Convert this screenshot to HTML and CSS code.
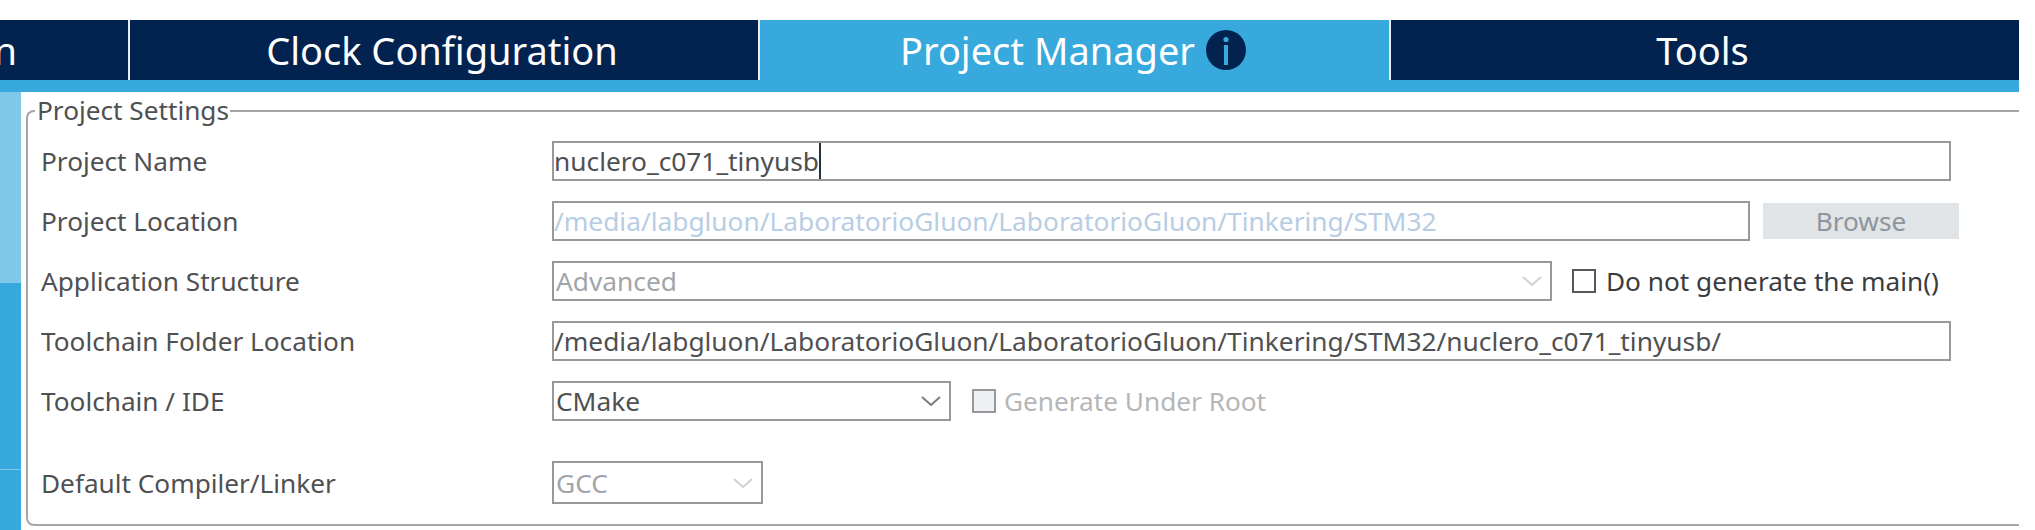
FILE: index.html
```html
<!DOCTYPE html>
<html lang="en">
<head>
<meta charset="utf-8">
<title>Project Manager</title>
<link rel="stylesheet" href="styles.css">
</head>
<body>
<nav class="tabs">
  <div class="tab tab-first">n</div>
  <div class="tab tab-clock">Clock Configuration</div>
  <div class="tab tab-active">Project Manager
    <svg class="info" viewBox="0 0 40 40" width="40" height="40" aria-hidden="true">
      <circle cx="20" cy="20" r="20" fill="#02234f"/>
      <circle cx="20" cy="9.5" r="2.6" fill="#38a9dc"/>
      <rect x="18" y="15" width="4" height="20" fill="#38a9dc"/>
    </svg>
  </div>
  <div class="tab tab-tools">Tools</div>
</nav>
<main class="main">
  <aside class="side">
    <div class="side-a"></div>
    <div class="side-b"></div>
    <div class="side-c"></div>
  </aside>
  <fieldset class="group">
    <legend class="legend">Project Settings</legend>
    <div class="form">
      <div class="row">
        <div class="label">Project Name</div>
        <div class="field grow">nuclero_c071_tinyusb<span class="caret"></span></div>
      </div>
      <div class="row">
        <div class="label">Project Location</div>
        <div class="field grow disabled-path">/media/labgluon/LaboratorioGluon/LaboratorioGluon/Tinkering/STM32</div>
        <div class="browse">Browse</div>
      </div>
      <div class="row">
        <div class="label">Application Structure</div>
        <div class="field select select-wide off">Advanced
          <svg class="chev" viewBox="0 0 20 10" width="20" height="10" aria-hidden="true"><path d="M1 1l9 8 9-8" fill="none" stroke="#cfd2d5" stroke-width="2"/></svg>
        </div>
        <div class="check check-on"><span class="box"></span>Do not generate the main()</div>
      </div>
      <div class="row">
        <div class="label">Toolchain Folder Location</div>
        <div class="field grow">/media/labgluon/LaboratorioGluon/LaboratorioGluon/Tinkering/STM32/nuclero_c071_tinyusb/</div>
      </div>
      <div class="row">
        <div class="label">Toolchain / IDE</div>
        <div class="field select select-mid">CMake
          <svg class="chev" viewBox="0 0 20 10" width="20" height="10" aria-hidden="true"><path d="M1 1l9 8 9-8" fill="none" stroke="#7a7d80" stroke-width="2"/></svg>
        </div>
        <div class="check check-off"><span class="box"></span>Generate Under Root</div>
      </div>
      <div class="row row-last">
        <div class="label">Default Compiler/Linker</div>
        <div class="field select select-small off">GCC
          <svg class="chev" viewBox="0 0 20 10" width="20" height="10" aria-hidden="true"><path d="M1 1l9 8 9-8" fill="none" stroke="#cfd2d5" stroke-width="2"/></svg>
        </div>
      </div>
    </div>
  </fieldset>
</main>
</body>
</html>
```

FILE: styles.css
```css
* { box-sizing: border-box; }
html, body { margin: 0; height: 530px; overflow: hidden; background: #fff; }
body { padding-top: 20px; font-family: "Noto Sans", sans-serif; color: #4f5052; }

.tabs { display: flex; width: 2019px; height: 72px; background: #38a9dc; padding-bottom: 12px; color: #fff; font-size: 38px; }
.tab { display: flex; align-items: center; justify-content: center; height: 60px; background: #02234f; white-space: nowrap; overflow: hidden; }
.tab-first { width: 130px; justify-content: flex-end; padding-right: 111px; border-right: 2px solid #e8edf2; }
.tab-clock { width: 630px; border-right: 2px solid #e8edf2; padding-right: 4px; }
.tab-active { width: 631px; background: #38a9dc; border-right: 2px solid #e8edf2; padding-right: 3px; }
.tab-tools { flex: 1; padding-right: 5px; }
.info { margin-left: 11px; }

.main { display: flex; width: 2019px; height: 438px; }
.side { flex: none; width: 21px; display: flex; flex-direction: column; }
.side-a { height: 191px; background: #7ec8ea; }
.side-b { height: 187px; background: #38a9dc; border-bottom: 1px solid #7ec8ea; }
.side-c { flex: 1; background: #38a9dc; }

.group { flex: none; width: 1993px; height: 432px; margin: 2px 0 0 5px; padding: 0; min-width: 0; border: 2px solid #a6a6a6; border-right: 0; border-radius: 8px 0 0 8px; }
.legend { margin-left: 7px; padding: 0 1px 2px 2px; font-size: 26.2px; line-height: 32px; }

.form { display: flex; flex-direction: column; gap: 20px; padding: 0 68px 0 13px; margin-top: 13px; }
.row { display: flex; align-items: center; height: 40px; font-size: 26.2px; }
.row-last { height: 43px; margin-top: 20px; }
.label { flex: none; width: 511px; }

.field { display: flex; align-items: center; height: 40px; padding-left: 0; border: 2px solid #999; background: #fff; white-space: nowrap; font-size: 26.3px; }
.grow { flex: 1; min-width: 0; }
.caret { width: 2px; height: 36px; background: #28303a; }
.disabled-path { color: #b7cde4; }

.browse { flex: none; width: 196px; height: 36px; margin: 0 -8px 0 13px; display: flex; align-items: center; justify-content: center; background: #e1e4e7; color: #8e959c; }

.select { flex: none; justify-content: space-between; padding: 0 8px 0 2px; }
.select-wide { width: 1000px; }
.select-mid { width: 399px; }
.select-small { width: 211px; height: 43px; }
.off { color: #a1a5a9; }
.chev { flex: none; }

.check { display: flex; align-items: center; margin-left: 20px; white-space: nowrap; }
.box { flex: none; width: 24px; height: 24px; margin-right: 10px; border: 2px solid #55585b; }
.check-on { color: #3a3c3f; }
.check-off { color: #b4b6b8; margin-left: 21px; }
.check-off .box { margin-right: 8px; border-color: #96999c; background: #eef0f3; }
```
